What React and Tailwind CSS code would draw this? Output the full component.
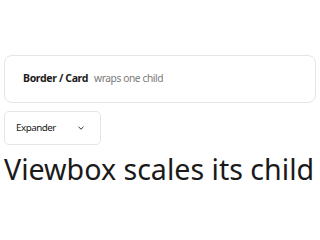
export default function App() {
  return (
    <div className="w-[320px] h-[240px] bg-white px-[4px] pt-[55px] flex flex-col items-start" style={{ fontFamily: '"Noto Sans", "Open Sans", sans-serif' }}>
      <div className="w-[312px] h-[48px] rounded-[8px] border border-[#e5e5e5] flex items-center pl-[18px] gap-[6px]">
        <span className="font-bold text-[#1a1a1a] text-[10.5px] tracking-[-0.35px]">Border / Card</span>
        <span className="text-[#7a7a7a] text-[10.2px] tracking-[-0.4px]">wraps one child</span>
      </div>
      <div className="mt-[8px] w-[97px] h-[34px] rounded-[5px] border border-[#e5e5e5] flex items-center pl-[11px] text-[9.8px] tracking-[-0.5px] text-[#1a1a1a]">
        <span>Expander</span>
        <svg className="ml-[22px]" width="6" height="4" viewBox="0 0 6 4" fill="none" stroke="#333" strokeWidth="1">
          <path d="M0.5 0.8 L3 3.2 L5.5 0.8" />
        </svg>
      </div>
      <div className="mt-[10px] text-[28.6px] leading-none text-[#1a1a1a] whitespace-nowrap">Viewbox scales its child</div>
    </div>
  );
}
